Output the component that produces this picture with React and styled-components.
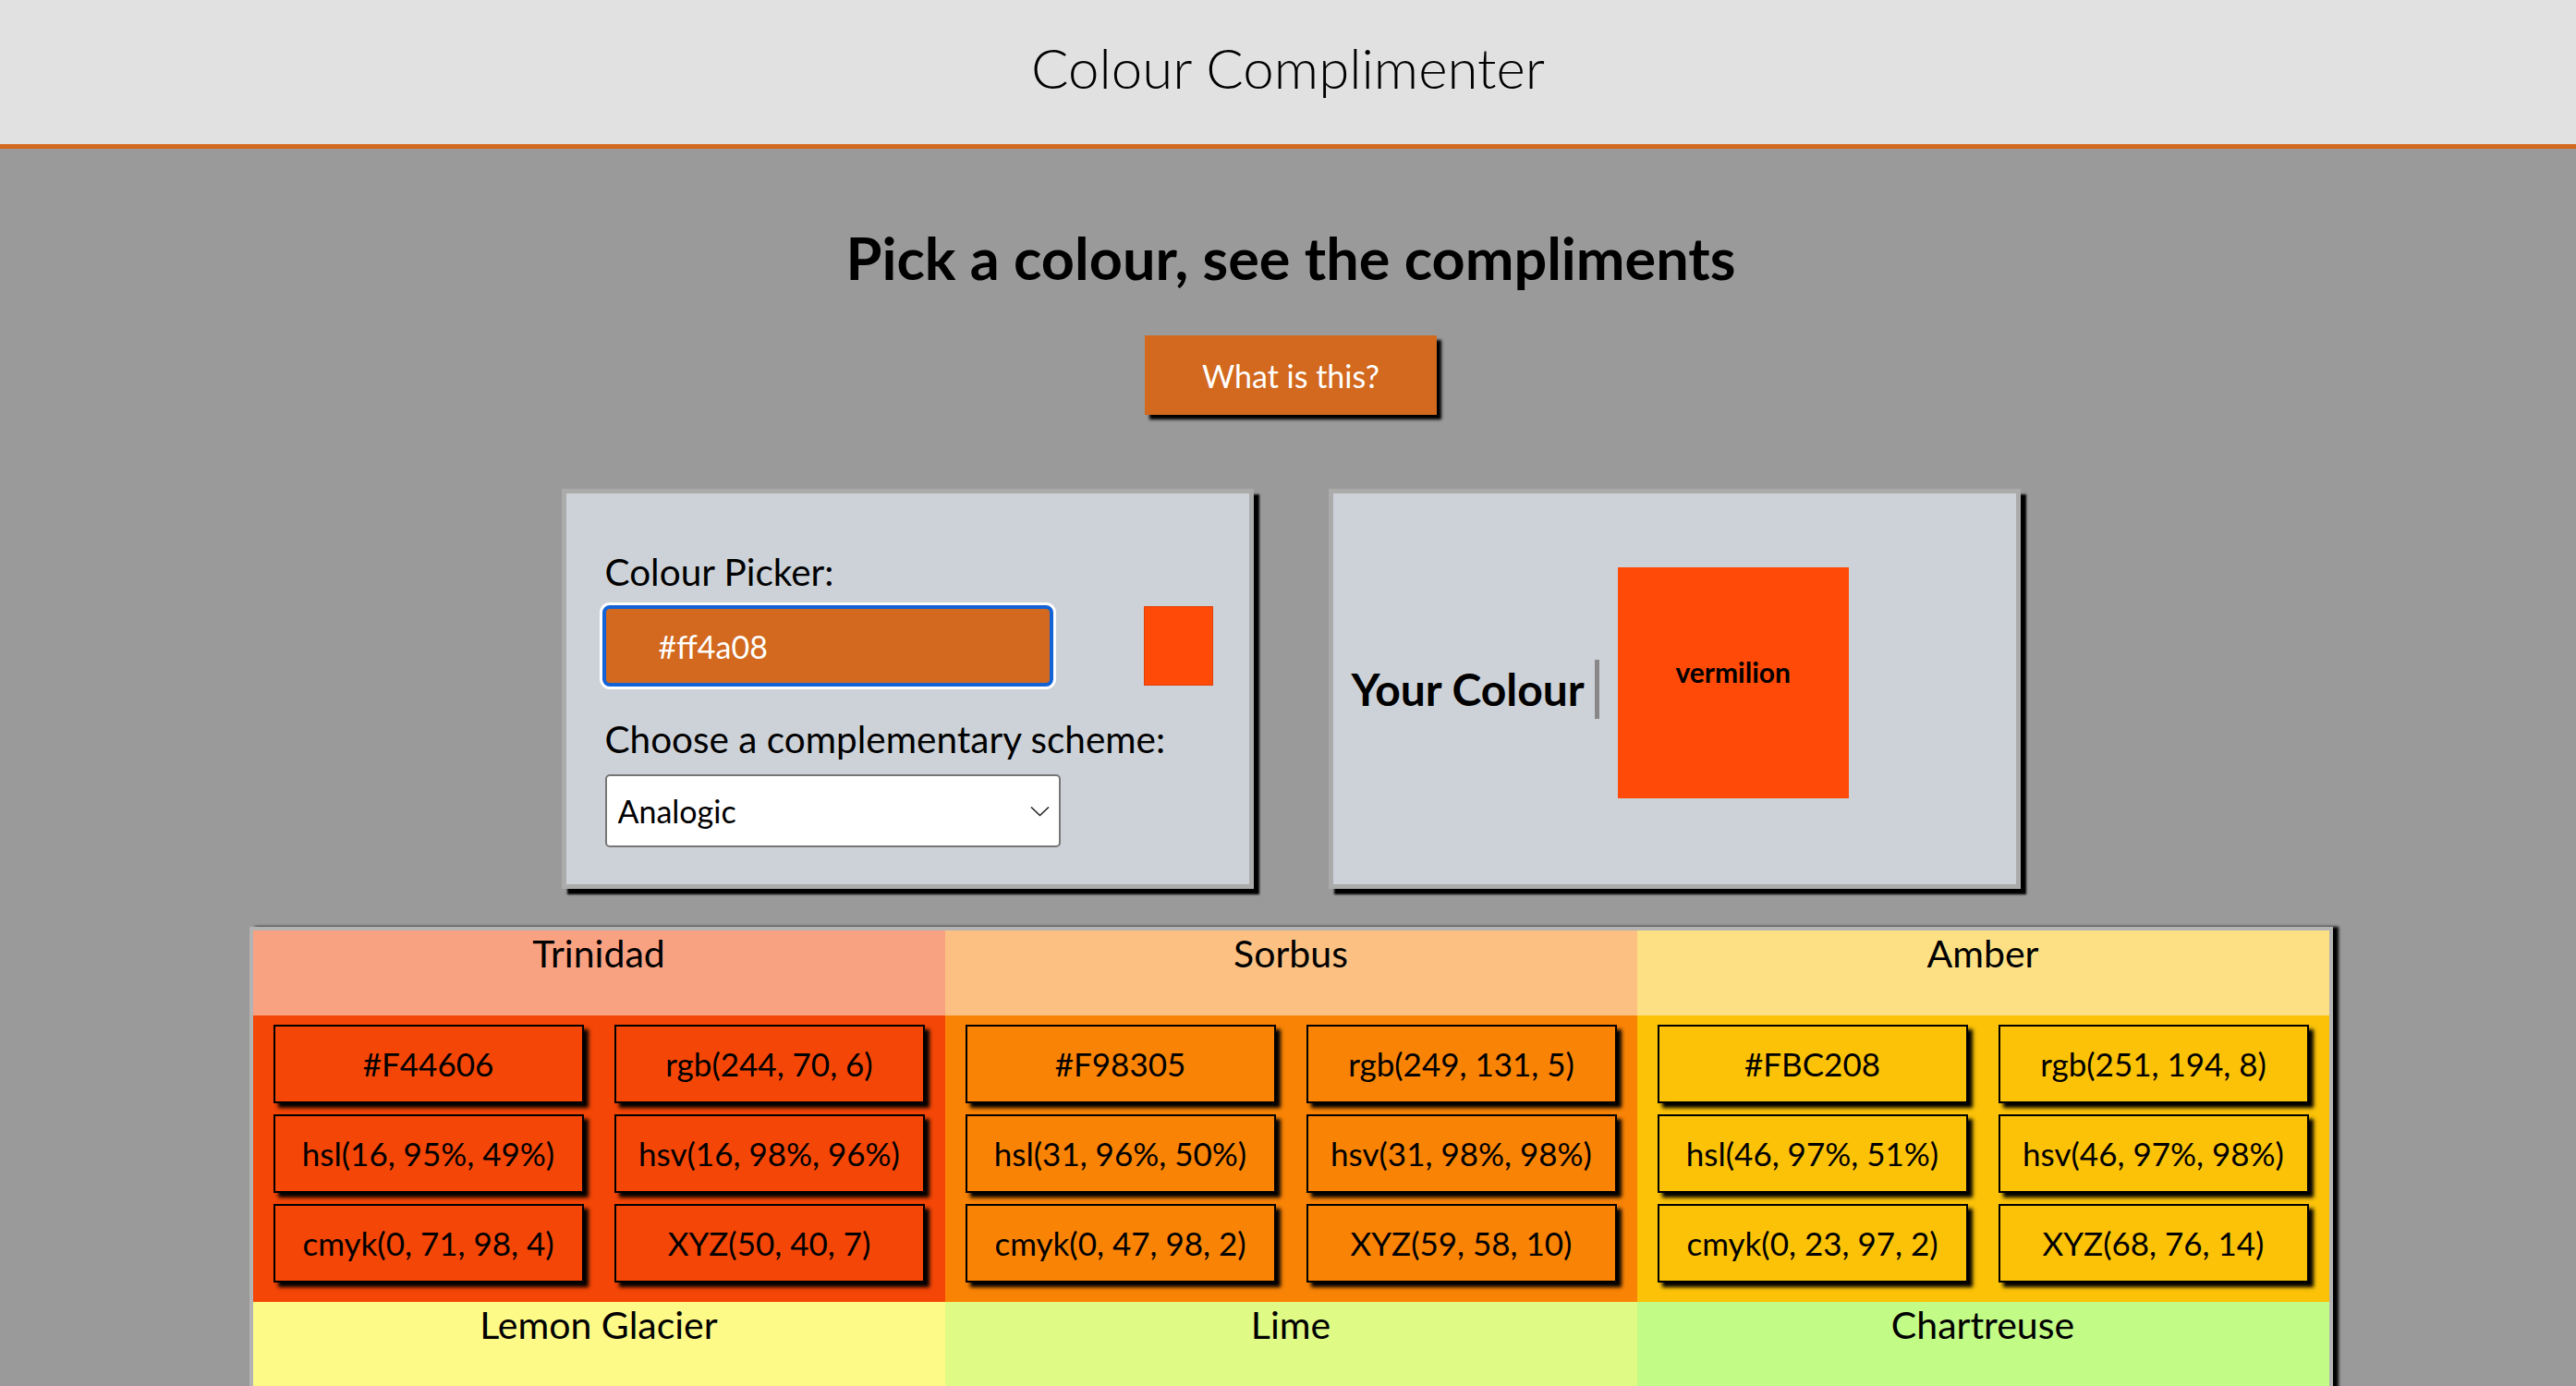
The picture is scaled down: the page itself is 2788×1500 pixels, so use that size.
import React from "react";
import styled, { createGlobalStyle } from "styled-components";

const GlobalStyle = createGlobalStyle`
  html, body {
    margin: 0;
    padding: 0;
  }
  body {
    background: #9a9a9a;
    font-family: Lato, "Open Sans", sans-serif;
    color: #000;
  }
  * {
    box-sizing: border-box;
  }
`;

const Header = styled.header`
  height: 161px;
  padding-bottom: 10px;
  background: #e1e1e1;
  border-bottom: 5px solid #d2691e;
  display: flex;
  align-items: center;
  justify-content: center;
`;

const Title = styled.h1`
  margin: 0;
  font-size: 60px;
  font-weight: 300;
`;

const Main = styled.main`
  display: flex;
  flex-direction: column;
  align-items: center;
  padding: 82px 0 120px 6px;
`;

const Heading = styled.h2`
  margin: 0;
  font-size: 63px;
  line-height: 72px;
  font-weight: 700;
`;

const InfoButton = styled.button`
  margin-top: 48px;
  width: 316px;
  height: 86px;
  border: none;
  background: #d2691e;
  color: #fff;
  font-family: inherit;
  font-size: 34px;
  box-shadow: 5px 5px 3px #000;
  cursor: pointer;
`;

const PanelRow = styled.div`
  display: flex;
  gap: 81px;
  margin-top: 80px;
`;

const Panel = styled.section`
  width: 749px;
  height: 433px;
  background: #cdd2d8;
  border: 5px solid #ababab;
  box-shadow: 6px 6px 2px #000;
`;

const PickerPanel = styled(Panel)`
  padding: 62px 0 0 42px;
`;

const Label = styled.label`
  display: block;
  font-size: 40.5px;
  line-height: 46px;
  margin-top: ${(p) => p.$gap || 0}px;
`;

const PickerRow = styled.div`
  display: flex;
  align-items: center;
  gap: 98px;
  margin: 13px 0 0 -3px;
`;

const HexInput = styled.input`
  width: 488px;
  height: 88px;
  padding: 0 0 0 57px;
  border: 4px solid #1463d6;
  border-radius: 8px;
  box-shadow: 0 0 0 3px #fff;
  background: #d2691e;
  color: #fff;
  font-family: inherit;
  font-size: 34px;
  outline: none;
`;

const Swatch = styled.div`
  width: 75px;
  height: 86px;
  background: ${(p) => p.$colour};
  border: 1px solid rgba(0, 0, 0, 0.12);
`;

const SelectBox = styled.div`
  margin-top: 15px;
  width: 493px;
  height: 79px;
  display: flex;
  align-items: center;
  padding: 0 10px 0 12px;
  background: #fff;
  border: 2px solid #767676;
  border-radius: 5px;
`;

const Select = styled.select`
  flex: 1;
  height: 100%;
  appearance: none;
  border: none;
  background: transparent;
  padding: 0;
  font-family: inherit;
  font-size: 34px;
  color: #000;
  outline: none;
`;

const YourPanel = styled(Panel)`
  display: flex;
  align-items: center;
  padding-left: 20px;
`;

const YourLabel = styled.h3`
  margin: 0;
  font-size: 48px;
  font-weight: 700;
`;

const Divider = styled.div`
  width: 5px;
  height: 64px;
  margin-left: 11px;
  background: #888;
`;

const ColourSquare = styled.div`
  width: 250px;
  height: 250px;
  margin: 0 0 14px 20px;
  padding-bottom: 24px;
  display: flex;
  align-items: center;
  justify-content: center;
  background: ${(p) => p.$colour};
  font-size: 30px;
  font-weight: 700;
`;

const SchemeTable = styled.div`
  margin-top: 41px;
  width: 2255px;
  display: grid;
  grid-template-columns: repeat(3, 1fr);
  border: 4px solid #b3b3b3;
  box-shadow: 6px 0 3px #000;
`;

const ColourBlock = styled.div`
  display: flex;
  flex-direction: column;
`;

const NameCell = styled.div`
  height: 92px;
  padding-top: 1px;
  text-align: center;
  font-size: 41px;
  line-height: 48px;
  background: ${(p) => p.$tint};
`;

const ValuesCell = styled.div`
  padding: 10px 22px 21px;
  display: grid;
  grid-template-columns: 1fr 1fr;
  column-gap: 33px;
  row-gap: 12px;
  background: ${(p) => p.$colour};
`;

const ValueChip = styled.div`
  height: 85px;
  display: flex;
  align-items: center;
  justify-content: center;
  padding-bottom: 2px;
  border: 2px solid #000;
  box-shadow: 5px 5px 4px #000;
  font-size: 35px;
`;

const toRgb = (hex) => [1, 3, 5].map((i) => parseInt(hex.slice(i, i + 2), 16));

const tint = (hex) => {
  const [r, g, b] = toRgb(hex);
  return `rgb(${(r + 255) >> 1}, ${(g + 255) >> 1}, ${(b + 255) >> 1})`;
};

const describe = (hex) => {
  const [r, g, b] = toRgb(hex);
  const [R, G, B] = [r, g, b].map((v) => v / 255);
  const max = Math.max(R, G, B);
  const min = Math.min(R, G, B);
  const d = max - min;
  let h = 0;
  if (d) {
    if (max === R) h = ((G - B) / d) % 6;
    else if (max === G) h = (B - R) / d + 2;
    else h = (R - G) / d + 4;
  }
  h = Math.round(h * 60);
  if (h < 0) h += 360;
  const l = (max + min) / 2;
  const sl = d ? d / (1 - Math.abs(2 * l - 1)) : 0;
  const sv = max ? d / max : 0;
  const k = 1 - max;
  const pct = (v) => Math.round(v * 100);
  const cmy = [R, G, B].map((v) => (k < 1 ? pct((1 - v - k) / (1 - k)) : 0));
  const X = pct(0.4124 * R + 0.3576 * G + 0.1805 * B);
  const Y = pct(0.2126 * R + 0.7152 * G + 0.0722 * B);
  const Z = pct(0.0193 * R + 0.1192 * G + 0.9505 * B);
  return [
    hex.toUpperCase(),
    `rgb(${r}, ${g}, ${b})`,
    `hsl(${h}, ${pct(sl)}%, ${pct(l)}%)`,
    `hsv(${h}, ${pct(sv)}%, ${pct(max)}%)`,
    `cmyk(${cmy.join(", ")}, ${pct(k)})`,
    `XYZ(${X}, ${Y}, ${Z})`,
  ];
};

const scheme = [
  { name: "Trinidad", hex: "#f44606" },
  { name: "Sorbus", hex: "#f98305" },
  { name: "Amber", hex: "#fbc208" },
  { name: "Lemon Glacier", hex: "#fbf50f" },
  { name: "Lime", hex: "#c1f70b" },
  { name: "Chartreuse", hex: "#85f70d" },
];

const picked = "#ff4a08";

export default function App() {
  return (
    <>
      <GlobalStyle />
      <Header>
        <Title>Colour Complimenter</Title>
      </Header>
      <Main>
        <Heading>Pick a colour, see the compliments</Heading>
        <InfoButton>What is this?</InfoButton>

        <PanelRow>
          <PickerPanel>
            <Label htmlFor="picker">Colour Picker:</Label>
            <PickerRow>
              <HexInput id="picker" value={picked} readOnly />
              <Swatch $colour={picked} />
            </PickerRow>
            <Label htmlFor="mode" $gap={34}>
              Choose a complementary scheme:
            </Label>
            <SelectBox>
              <Select id="mode" defaultValue="analogic">
                <option value="monochrome">Monochrome</option>
                <option value="analogic">Analogic</option>
                <option value="complement">Complement</option>
                <option value="triad">Triad</option>
                <option value="quad">Quad</option>
              </Select>
              <svg width="21" height="12" viewBox="0 0 21 12" fill="none">
                <path d="M1 1.5 L10.5 10.5 L20 1.5" stroke="#222" strokeWidth="1.6" />
              </svg>
            </SelectBox>
          </PickerPanel>

          <YourPanel>
            <YourLabel>Your Colour</YourLabel>
            <Divider />
            <ColourSquare $colour={picked}>vermilion</ColourSquare>
          </YourPanel>
        </PanelRow>

        <SchemeTable>
          {scheme.map((c) => (
            <ColourBlock key={c.name}>
              <NameCell $tint={tint(c.hex)}>{c.name}</NameCell>
              <ValuesCell $colour={c.hex}>
                {describe(c.hex).map((v) => (
                  <ValueChip key={v}>{v}</ValueChip>
                ))}
              </ValuesCell>
            </ColourBlock>
          ))}
        </SchemeTable>
      </Main>
    </>
  );
}
